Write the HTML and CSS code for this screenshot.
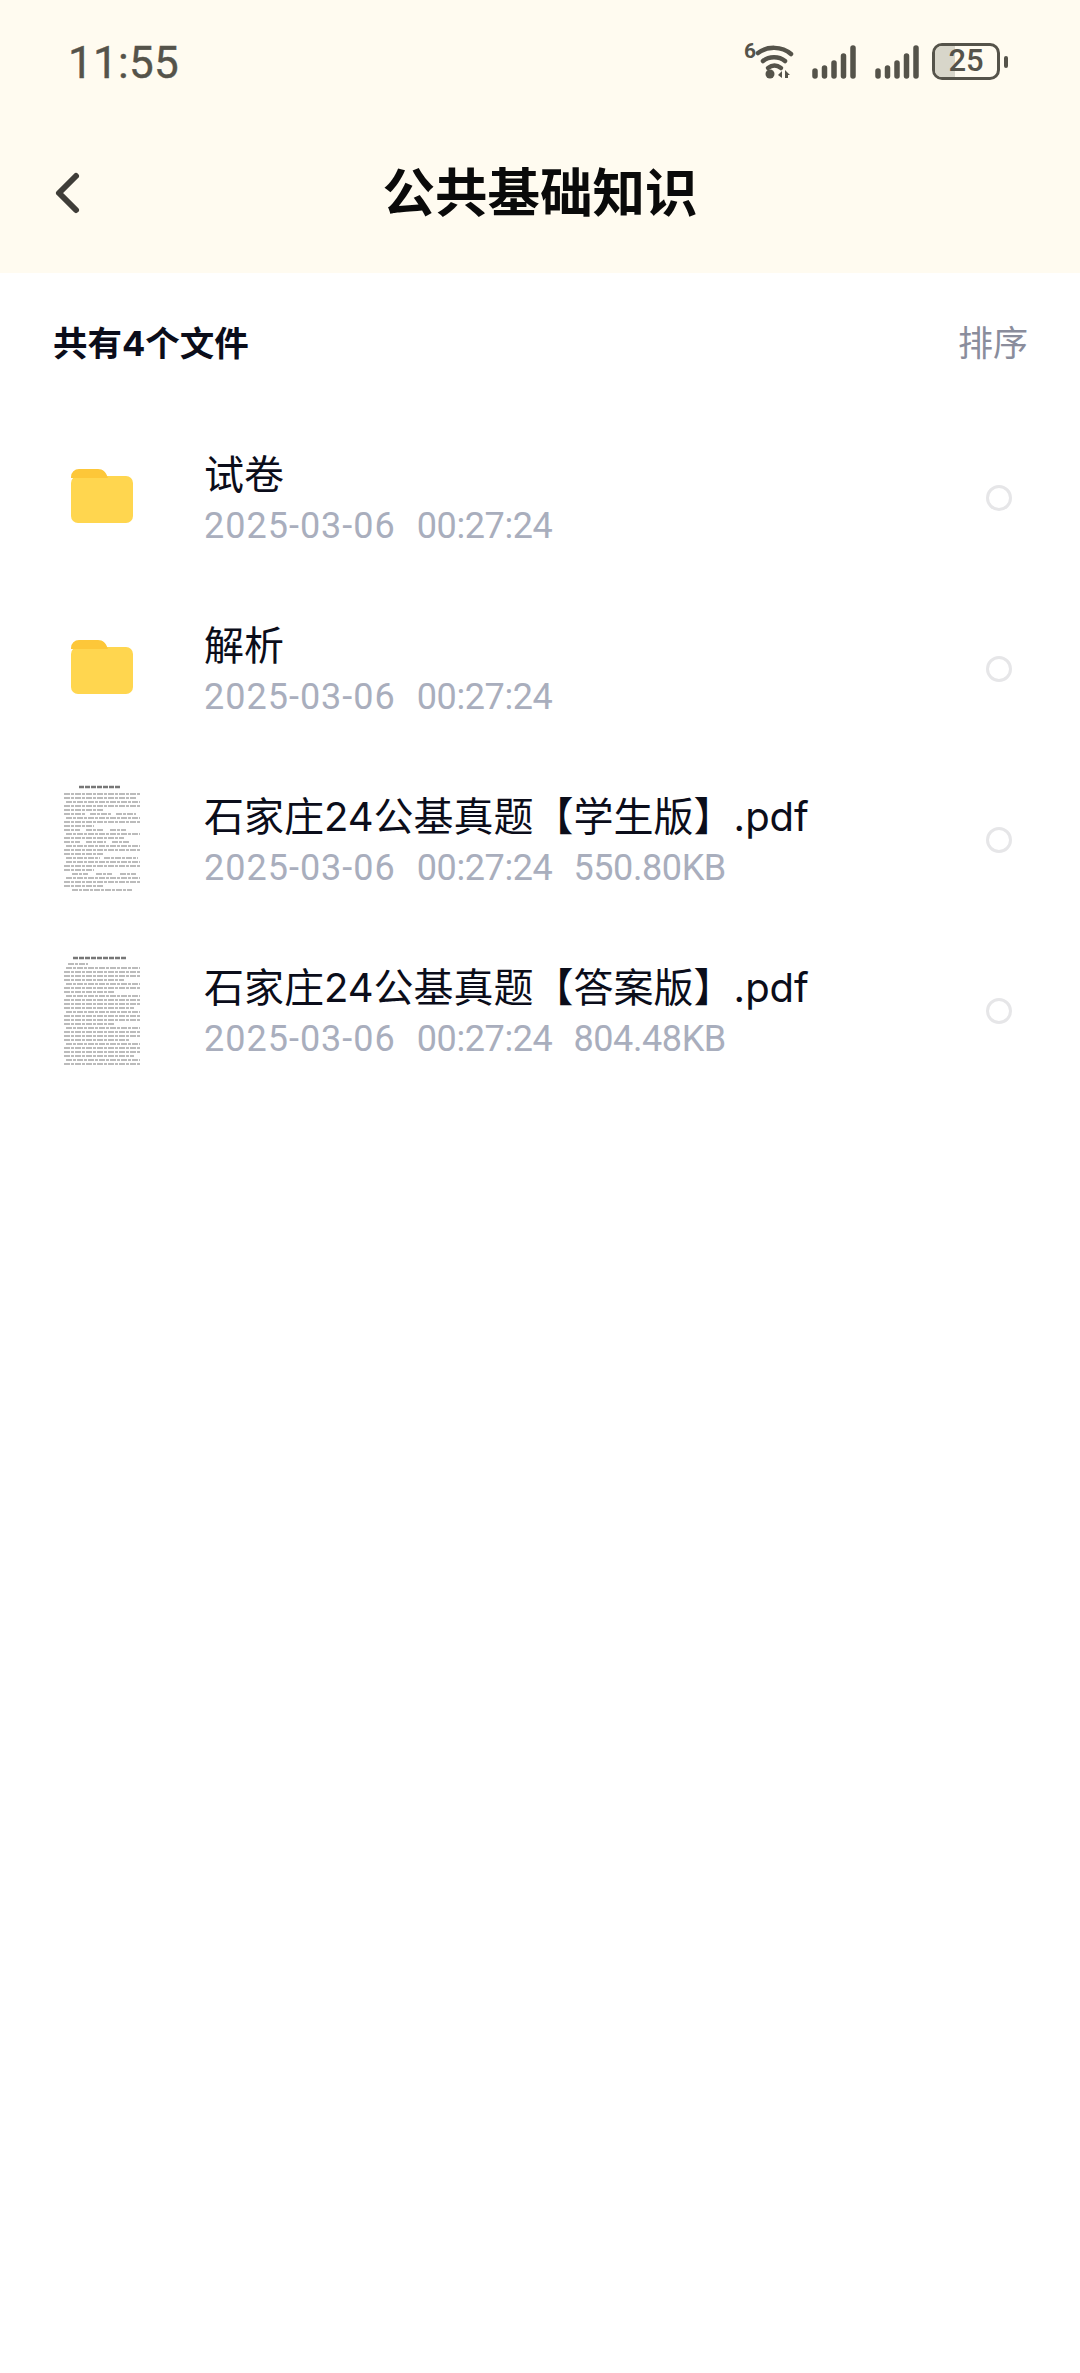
FILE: index.html
```html
<!DOCTYPE html>
<html lang="zh-CN">

<head>
    <meta charset="UTF-8">
    <meta name="viewport" content="width=device-width, initial-scale=1.0">
    <title>公共基础知识</title>
    <link rel="stylesheet" href="styles.css">
</head>

<body>
    <svg class="defs" width="0" height="0">
        <defs>
            <symbol id="folder" viewBox="0 0 62 54">
                <rect y="7" width="62" height="47" rx="7" fill="#ffd64f"/>
                <path d="M0 10v-2a8 8 0 0 1 8-8h19c5 0 8 3 10 9h-37z" fill="#fdc739"/>
            </symbol>
            <symbol id="signal" viewBox="0 0 46 34">
                <g stroke="#55534a" stroke-width="5.500" stroke-linecap="round">
                    <path d="M3 31v-5M12.500 31v-8M22 31v-13M31.500 31v-20M41 31v-28"/>
                </g>
            </symbol>
        </defs>
    </svg>

    <header class="top">
        <div class="status">
            <span class="clock">11:55</span>
            <div class="status-icons">
                <svg class="wifi" width="54" height="40" viewBox="0 0 54 40">
                    <text x="0" y="18" class="wifi-six">6</text>
                    <g fill="none" stroke="#55534a" stroke-width="4.500" stroke-linecap="round">
                        <path d="M14 13c9-7 24-7 33 1"/>
                        <path d="M19 21c6-5 16-5 22 0"/>
                        <path d="M24 28c4-3 9-3 13 0"/>
                    </g>
                    <circle cx="26" cy="34" r="4.500" fill="#55534a"/>
                    <path d="M34 35l4-4v7zM41 30l5 5h-2v3h-3z" fill="#55534a"/>
                </svg>
                <svg class="bars" width="46" height="34"><use href="#signal"/></svg>
                <svg class="bars" width="46" height="34"><use href="#signal"/></svg>
                <div class="battery">
                    <div class="battery-body">
                        <span class="battery-level"></span>
                        <span class="battery-text">25</span>
                    </div>
                    <span class="battery-nub"></span>
                </div>
            </div>
        </div>
        <div class="titlebar">
            <svg class="back" width="28" height="44" viewBox="0 0 28 44">
                <path d="M22 5l-17 17 17 17" fill="none" stroke="#3f3d38" stroke-width="6" stroke-linecap="round" stroke-linejoin="round"/>
            </svg>
            <h1>公共基础知识</h1>
        </div>
    </header>

    <main>
        <div class="summary">
            <span class="count">共有4个文件</span>
            <span class="sort">排序</span>
        </div>

        <ul class="files">
            <li class="file">
                <div class="thumb"><svg class="folder" width="62" height="54"><use href="#folder"/></svg></div>
                <div class="info">
                    <div class="name">试卷</div>
                    <div class="meta"><span class="date">2025-03-06</span><span>00:27:24</span></div>
                </div>
                <span class="radio"></span>
            </li>
            <li class="file">
                <div class="thumb"><svg class="folder" width="62" height="54"><use href="#folder"/></svg></div>
                <div class="info">
                    <div class="name">解析</div>
                    <div class="meta"><span class="date">2025-03-06</span><span>00:27:24</span></div>
                </div>
                <span class="radio"></span>
            </li>
            <li class="file">
                <div class="thumb">
                    <svg class="doc" width="80" height="112" viewBox="0 0 80 112">
                        <path class="doc-title" d="M17 3h42"/>
                        <path class="doc-lines" d="M2 10h76M2 14h72M4 18h74M2 22h76M2 26h40M2 30h22M28 30h22M54 30h20M4 34h74M2 38h76M2 42h30M2 46h16M24 46h18M48 46h16M4 50h74M2 54h60M2 58h16M24 58h20M50 58h18M4 62h74M2 66h76M2 70h40M4 74h34M42 74h34M4 78h74M2 82h76M2 86h30M10 90h16M34 90h16M58 90h16M4 94h74M2 98h76M2 102h40M10 106h60"/>
                    </svg>
                </div>
                <div class="info">
                    <div class="name">石家庄24公基真题【学生版】.pdf</div>
                    <div class="meta"><span class="date">2025-03-06</span><span>00:27:24</span><span>550.80KB</span></div>
                </div>
                <span class="radio"></span>
            </li>
            <li class="file">
                <div class="thumb">
                    <svg class="doc" width="80" height="112" viewBox="0 0 80 112">
                        <path class="doc-title" d="M11 3h54"/>
                        <path class="doc-lines" d="M6 9h20M4 13h74M2 17h76M2 21h76M2 25h60M4 29h74M2 33h76M2 37h50M4 41h74M2 45h76M2 49h76M2 53h70M4 57h74M2 61h76M2 65h76M2 69h50M4 73h74M2 77h76M2 81h76M2 85h66M4 89h74M2 93h76M2 97h76M2 101h70M4 105h74M2 109h76"/>
                    </svg>
                </div>
                <div class="info">
                    <div class="name">石家庄24公基真题【答案版】.pdf</div>
                    <div class="meta"><span class="date">2025-03-06</span><span>00:27:24</span><span>804.48KB</span></div>
                </div>
                <span class="radio"></span>
            </li>
        </ul>
    </main>
</body>

</html>
```

FILE: styles.css
```css
* {
    box-sizing: border-box;
}

html, body {
    margin: 0;
    padding: 0;
    background-color: #ffffff;
}

body {
    width: 1080px;
    height: 2373px;
    overflow: hidden;
    font-family: Inter, "Noto Sans CJK SC", sans-serif;
}

.defs {
    display: block;
    height: 0;
}

.top {
    background-color: #fffbf0;
    height: 273px;
}

/* status bar */
.status {
    display: flex;
    justify-content: space-between;
    align-items: center;
    height: 126px;
    padding: 0 72px 0 68px;
}

.clock {
    font-family: Roboto, sans-serif;
    font-size: 44px;
    letter-spacing: 0.3px;
    -webkit-text-stroke: 0.4px #55534a;
    color: #55534a;
}

.status-icons {
    display: flex;
    align-items: flex-start;
    height: 40px;
    margin-bottom: 6px;
}

.wifi {
    margin-right: 14px;
    overflow: visible;
}

.wifi-six {
    font-family: Roboto, sans-serif;
    font-size: 21px;
    font-weight: 700;
    fill: #55534a;
}

.bars {
    display: block;
    margin-top: 5px;
    margin-right: 17px;
}

.bars + .battery {
    margin-left: -6px;
}

.battery {
    display: flex;
    align-items: center;
    margin-top: 3px;
}

.battery-body {
    position: relative;
    width: 68px;
    height: 37px;
    border: 3.5px solid #55534a;
    border-radius: 10px;
    overflow: hidden;
    text-align: center;
}

.battery-level {
    position: absolute;
    left: 0;
    top: 0;
    bottom: 0;
    width: 20px;
    background-color: #d8d6ca;
}

.battery-text {
    position: relative;
    font-family: Roboto, sans-serif;
    font-size: 31px;
    font-weight: 500;
    line-height: 30px;
    color: #55534a;
}

.battery-nub {
    width: 4px;
    height: 12px;
    margin-left: 4px;
    border-radius: 2px;
    background-color: #55534a;
}

/* title bar */
.titlebar {
    position: relative;
    display: flex;
    justify-content: center;
    align-items: center;
    height: 126px;
}

.titlebar h1 {
    margin: 0;
    font-size: 52.500px;
    font-weight: 700;
    color: #0a0a0a;
}

.back {
    position: absolute;
    left: 54px;
    top: 45px;
}

/* list */
.summary {
    display: flex;
    justify-content: space-between;
    align-items: center;
    height: 139px;
    padding: 0 52px 4px 53px;
}

.count {
    font-size: 34.500px;
    font-weight: 700;
    color: #0b0d1a;
}

.sort {
    font-size: 35px;
    color: #8a8d9c;
}

.files {
    list-style: none;
    margin: 0;
    padding: 0;
}

.file {
    display: flex;
    align-items: center;
    height: 171px;
    padding: 0 68px 0 62px;
}

.thumb {
    display: flex;
    justify-content: center;
    align-items: center;
    width: 80px;
    margin-right: 62px;
}

.folder {
    margin-top: -3px;
}

.doc {
    display: block;
    filter: blur(0.6px);
}

.doc-title {
    fill: none;
    stroke: #777777;
    stroke-width: 2.500;
    stroke-dasharray: 5 1;
}

.doc-lines {
    fill: none;
    stroke: #a6a6a6;
    stroke-width: 1.500;
    stroke-dasharray: 6 1 3 1;
}

.info {
    flex: 1;
}

.name {
    font-size: 40px;
    line-height: 56px;
    color: #0b0d1a;
}

.meta {
    display: flex;
    gap: 21px;
    font-family: Roboto, "Noto Sans CJK SC", sans-serif;
    font-size: 36px;
    line-height: 46px;
    letter-spacing: -0.4px;
    color: #a9aebd;
}

.date {
    letter-spacing: 1px;
}

.radio {
    width: 26px;
    height: 26px;
    border: 3px solid #e6e6e8;
    border-radius: 50%;
}
```
